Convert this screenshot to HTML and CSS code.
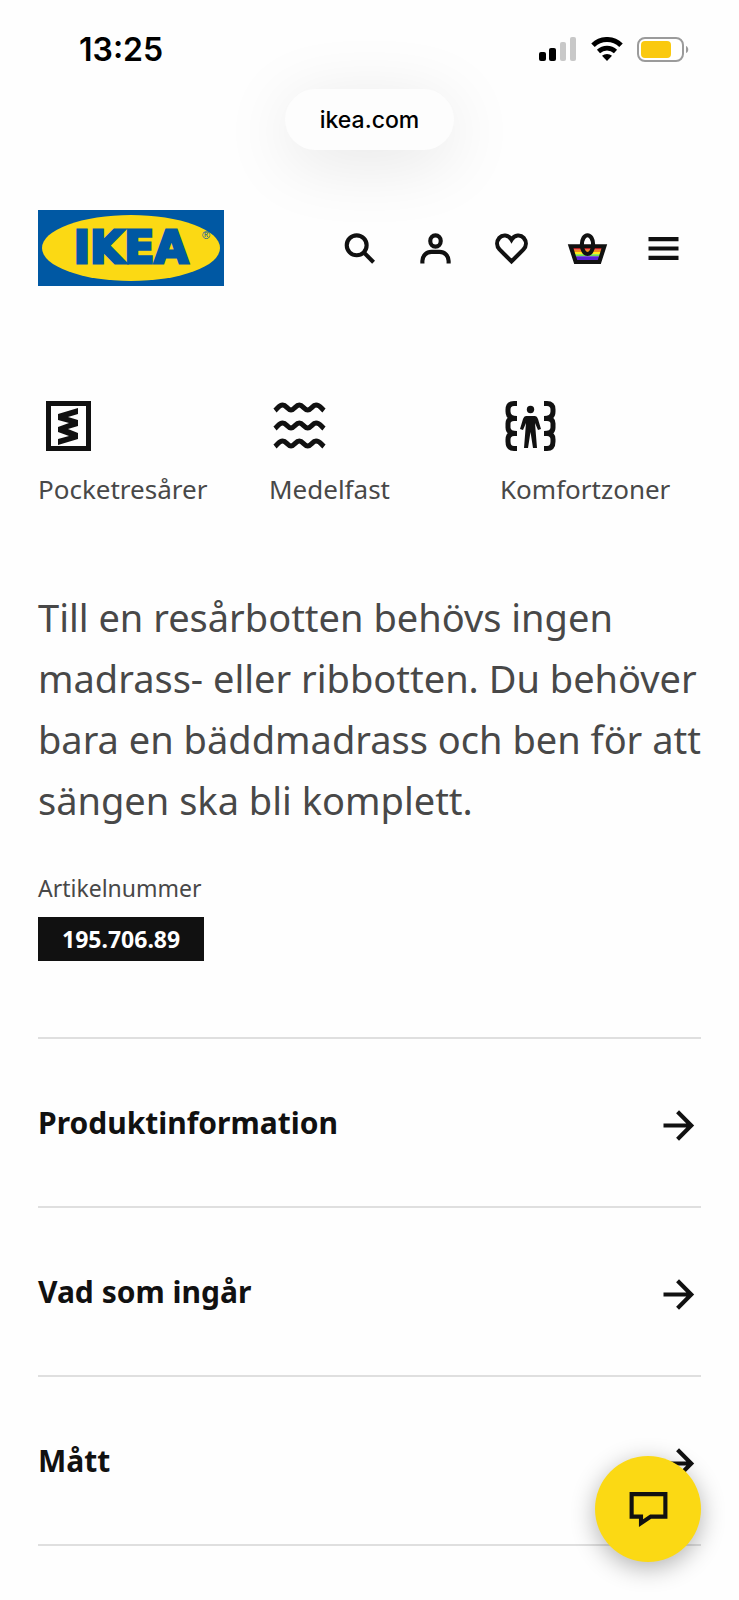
FILE: index.html
```html
<!DOCTYPE html>
<html lang="sv">
<head>
  <meta charset="UTF-8">
  <meta name="viewport" content="width=device-width, initial-scale=1">
  <title>IKEA</title>
  <link rel="stylesheet" href="styles.css">
</head>
<body>
  <div class="status-bar">
    <span class="time">13:25</span>
    <div class="status-icons">
      <svg width="38" height="24" viewBox="0 0 38 24">
        <rect x="0" y="15" width="7" height="9" rx="2" fill="#000"/>
        <rect x="10" y="11" width="7" height="13" rx="2" fill="#000"/>
        <rect x="21" y="5" width="6" height="19" rx="2" fill="#c8c8c8"/>
        <rect x="31" y="0" width="6" height="24" rx="2" fill="#c8c8c8"/>
      </svg>
      <svg width="32" height="24" viewBox="0 0 32 24">
        <path d="M2 8.200a20 20 0 0 1 28 0" fill="none" stroke="#000" stroke-width="5"/>
        <path d="M7.500 14.500a12.500 12.500 0 0 1 17 0" fill="none" stroke="#000" stroke-width="4.600"/>
        <path d="M11 18.800a7.500 7.500 0 0 1 10 0L16 24z" fill="#000"/>
      </svg>
      <svg width="52" height="25" viewBox="0 0 52 25">
        <rect x="1" y="1" width="45" height="23" rx="7" fill="#fff" stroke="#9b9b9b" stroke-width="2"/>
        <rect x="4" y="4" width="30" height="17" rx="4" fill="#fac90f"/>
        <path d="M49 9c3 1 3 6 0 7z" fill="#9b9b9b"/>
      </svg>
    </div>
  </div>

  <div class="address-bar">
    <button class="address" type="button">ikea.com</button>
  </div>

  <header class="header">
    <a href="#" class="logo" aria-label="IKEA">
      <svg width="186" height="76" viewBox="0 0 186 76">
        <rect width="186" height="76" fill="#0058a3"/>
        <ellipse cx="93" cy="38" rx="89" ry="33" fill="#fbd914"/>
        <text class="logo-text" x="93" y="53" text-anchor="middle">IKEA</text>
        <text class="logo-mark" x="168" y="29" text-anchor="middle">®</text>
      </svg>
    </a>
    <nav class="nav">
      <button type="button" class="nav-button" aria-label="Sök">
        <svg class="icon" viewBox="0 0 24 24">
          <circle cx="10.500" cy="10.300" r="5.300"/>
          <path d="M14.400 14.200l5.100 5.100"/>
        </svg>
      </button>
      <button type="button" class="nav-button" aria-label="Logga in">
        <svg class="icon" viewBox="0 0 24 24">
          <ellipse cx="12" cy="8" rx="2.800" ry="3"/>
          <path d="M5 20v-1.400a4.800 4.800 0 0 1 4.800-4.800h4.400a4.800 4.800 0 0 1 4.800 4.800V20"/>
        </svg>
      </button>
      <button type="button" class="nav-button" aria-label="Favoriter">
        <svg class="icon" viewBox="0 0 24 24">
          <path d="M12 7.300C10.300 4.500 7.100 4.500 5.500 6.300 3.900 8.200 4 10.800 5.600 12.500L12 18.900l6.400-6.400c1.600-1.700 1.700-4.300.1-6.200-1.600-1.800-4.800-1.800-6.500 1z"/>
        </svg>
      </button>
      <button type="button" class="nav-button" aria-label="Varukorg">
        <svg class="icon" viewBox="0 0 24 24">
          <g stroke="none">
            <path d="M3 10.500h18v2.100H3.500z" fill="#e8262a"/>
            <path d="M3.500 12.600h17l-.3 1.300H3.800z" fill="#f68b1f"/>
            <path d="M3.800 13.900h16.400l-.3 1.100H4.100z" fill="#ffec1a"/>
            <path d="M4.100 15h15.800l-.3 1.100H4.400z" fill="#6fe04a"/>
            <path d="M4.400 16.100h15.200l-1 3.100H5.500z" fill="#5a1fd6"/>
          </g>
          <path d="M3 10.800h18l-2.700 8.400H5.700z"/>
          <ellipse cx="12" cy="9.900" rx="3" ry="5"/>
        </svg>
      </button>
      <button type="button" class="nav-button" aria-label="Meny">
        <svg class="icon" viewBox="0 0 24 24">
          <path d="M4 7h16M4 12h16M4 17h16"/>
        </svg>
      </button>
    </nav>
  </header>

  <main class="content">
    <ul class="features">
      <li class="feature">
        <svg class="feature-icon" viewBox="0 0 60 60">
          <rect x="10.500" y="7.500" width="40" height="45" fill="none" stroke="#111" stroke-width="5"/>
          <path d="M40 12v6l-10 3 10 3v6l-10 3 10 4v6l-20 6v-6l11-3-11-4v-5l11-4-11-3v-6z" fill="#111"/>
        </svg>
        <span>Pocketresårer</span>
      </li>
      <li class="feature">
        <svg class="feature-icon" viewBox="0 0 60 60">
          <g fill="none" stroke="#111" stroke-width="5">
            <path id="wave" d="M6 14.500C9 12 10 9 13.700 9S18.500 14 22 14 26.600 9 30.300 9 35 14 38.700 14 43.300 9 47 9s5 3 8 5.500"/>
            <use href="#wave" y="18"/>
            <use href="#wave" y="36"/>
          </g>
        </svg>
        <span>Medelfast</span>
      </li>
      <li class="feature">
        <svg class="feature-icon" viewBox="0 0 60 60">
          <g fill="none" stroke="#111" stroke-width="5">
            <path id="zone" d="M17 7.500h-3q-6 0-6 6v2q0 7 9 7h-3q-6 0-6 5v4q0 6 9 6h-3q-6 0-6 6v2q0 7 6 7h3"/>
            <use href="#zone" transform="matrix(-1 0 0 1 61 0)"/>
          </g>
          <circle cx="30.500" cy="13.500" r="3.700" fill="#111"/>
          <path d="M26 20h9q2 0 3 3l3 10-3 1-3-7 2 25h-4l-2.500-16L28 52h-4l2-25-3 7-3-1 3-10q1-3 3-3z" fill="#111"/>
        </svg>
        <span>Komfortzoner</span>
      </li>
    </ul>

    <p class="description">Till en resårbotten behövs ingen madrass- eller ribbotten. Du behöver bara en bäddmadrass och ben för att sängen ska bli komplett.</p>

    <div class="article">
      <span class="article-label">Artikelnummer</span>
      <span class="article-number">195.706.89</span>
    </div>

    <div class="sections">
      <button type="button" class="section">
        <span>Produktinformation</span>
        <svg class="icon" viewBox="0 0 24 24"><path d="M4 12h14M11.500 4.700l7.300 7.300-7.300 7.300"/></svg>
      </button>
      <button type="button" class="section">
        <span>Vad som ingår</span>
        <svg class="icon" viewBox="0 0 24 24"><path d="M4 12h14M11.500 4.700l7.300 7.300-7.300 7.300"/></svg>
      </button>
      <button type="button" class="section">
        <span>Mått</span>
        <svg class="icon" viewBox="0 0 24 24"><path d="M4 12h14M11.500 4.700l7.300 7.300-7.300 7.300"/></svg>
      </button>
    </div>
  </main>

  <button type="button" class="chat" aria-label="Chatta med oss">
    <svg class="icon" viewBox="0 0 24 24">
      <path d="M3 3.800h18v12h-7.800L8 19.300v-3.500H3z"/>
    </svg>
  </button>
</body>
</html>
```
FILE: styles.css
```css
* {
  margin: 0;
  padding: 0;
  box-sizing: border-box;
}

body {
  background: #fefefe;
  color: #111;
  font-family: 'Noto Sans', sans-serif;
}

button {
  background: none;
  border: none;
  color: inherit;
  font-family: inherit;
  cursor: pointer;
}

svg {
  display: block;
}

.icon {
  width: 45px;
  height: 45px;
  flex-shrink: 0;
  fill: none;
  stroke: #111;
  stroke-width: 2.2;
}

/* Status bar */
.status-bar {
  display: flex;
  justify-content: space-between;
  align-items: center;
  height: 89px;
  padding: 9px 50px 0 79px;
}

.time {
  font-family: Inter, sans-serif;
  font-size: 32px;
  font-weight: 600;
  color: #000;
}

.status-icons {
  display: flex;
  align-items: center;
  gap: 14px;
}

.address-bar {
  display: flex;
  justify-content: center;
}

.address {
  height: 61px;
  padding: 0 35px;
  border-radius: 31px;
  background: #fdfdfd;
  box-shadow: 0 12px 70px rgba(0, 0, 0, 0.1);
  font-family: Inter, sans-serif;
  font-size: 23px;
  font-weight: 500;
  color: #000;
}

/* Header */
.header {
  display: flex;
  justify-content: space-between;
  align-items: center;
  padding: 60px 38px 0;
}

.logo-text {
  font-family: 'DejaVu Sans', sans-serif;
  font-size: 44px;
  font-weight: 700;
  fill: #0058a3;
  stroke: #0058a3;
  stroke-width: 3;
}

.logo-mark {
  font-family: 'Liberation Sans', sans-serif;
  font-size: 11px;
  fill: #0058a3;
}

.nav {
  display: flex;
}

.nav-button {
  display: flex;
  justify-content: center;
  align-items: center;
  width: 76px;
  height: 76px;
}

/* Product */
.content {
  padding: 110px 38px 54px;
}

.features {
  display: grid;
  grid-template-columns: repeat(3, 1fr);
  gap: 30px;
  list-style: none;
}

.feature {
  font-size: 26px;
  line-height: 40px;
  color: #484848;
}

.feature-icon {
  width: 60px;
  height: 60px;
  margin-bottom: 13px;
}

.description {
  margin-top: 78px;
  font-size: 38px;
  line-height: 61px;
  color: #484848;
}

.article {
  display: flex;
  flex-direction: column;
  align-items: flex-start;
  gap: 12px;
  margin-top: 40px;
  font-size: 23px;
  line-height: 34px;
}

.article-label {
  color: #484848;
}

.article-number {
  padding: 5px 24px;
  background: #111;
  color: #fff;
  font-weight: 700;
}

.sections {
  margin-top: 76px;
  border-top: 2px solid #dfdfdf;
}

.section {
  display: flex;
  justify-content: space-between;
  align-items: center;
  width: 100%;
  height: 169px;
  border-bottom: 2px solid #dfdfdf;
  font-size: 30px;
  font-weight: 700;
  text-align: left;
}

.section .icon {
  margin-top: 5px;
}

/* Chat */
.chat {
  position: fixed;
  right: 38px;
  bottom: 38px;
  display: flex;
  justify-content: center;
  align-items: center;
  width: 106px;
  height: 106px;
  border-radius: 50%;
  background: #fbd914;
  box-shadow: 0 6px 24px rgba(0, 0, 0, 0.3);
}
```
